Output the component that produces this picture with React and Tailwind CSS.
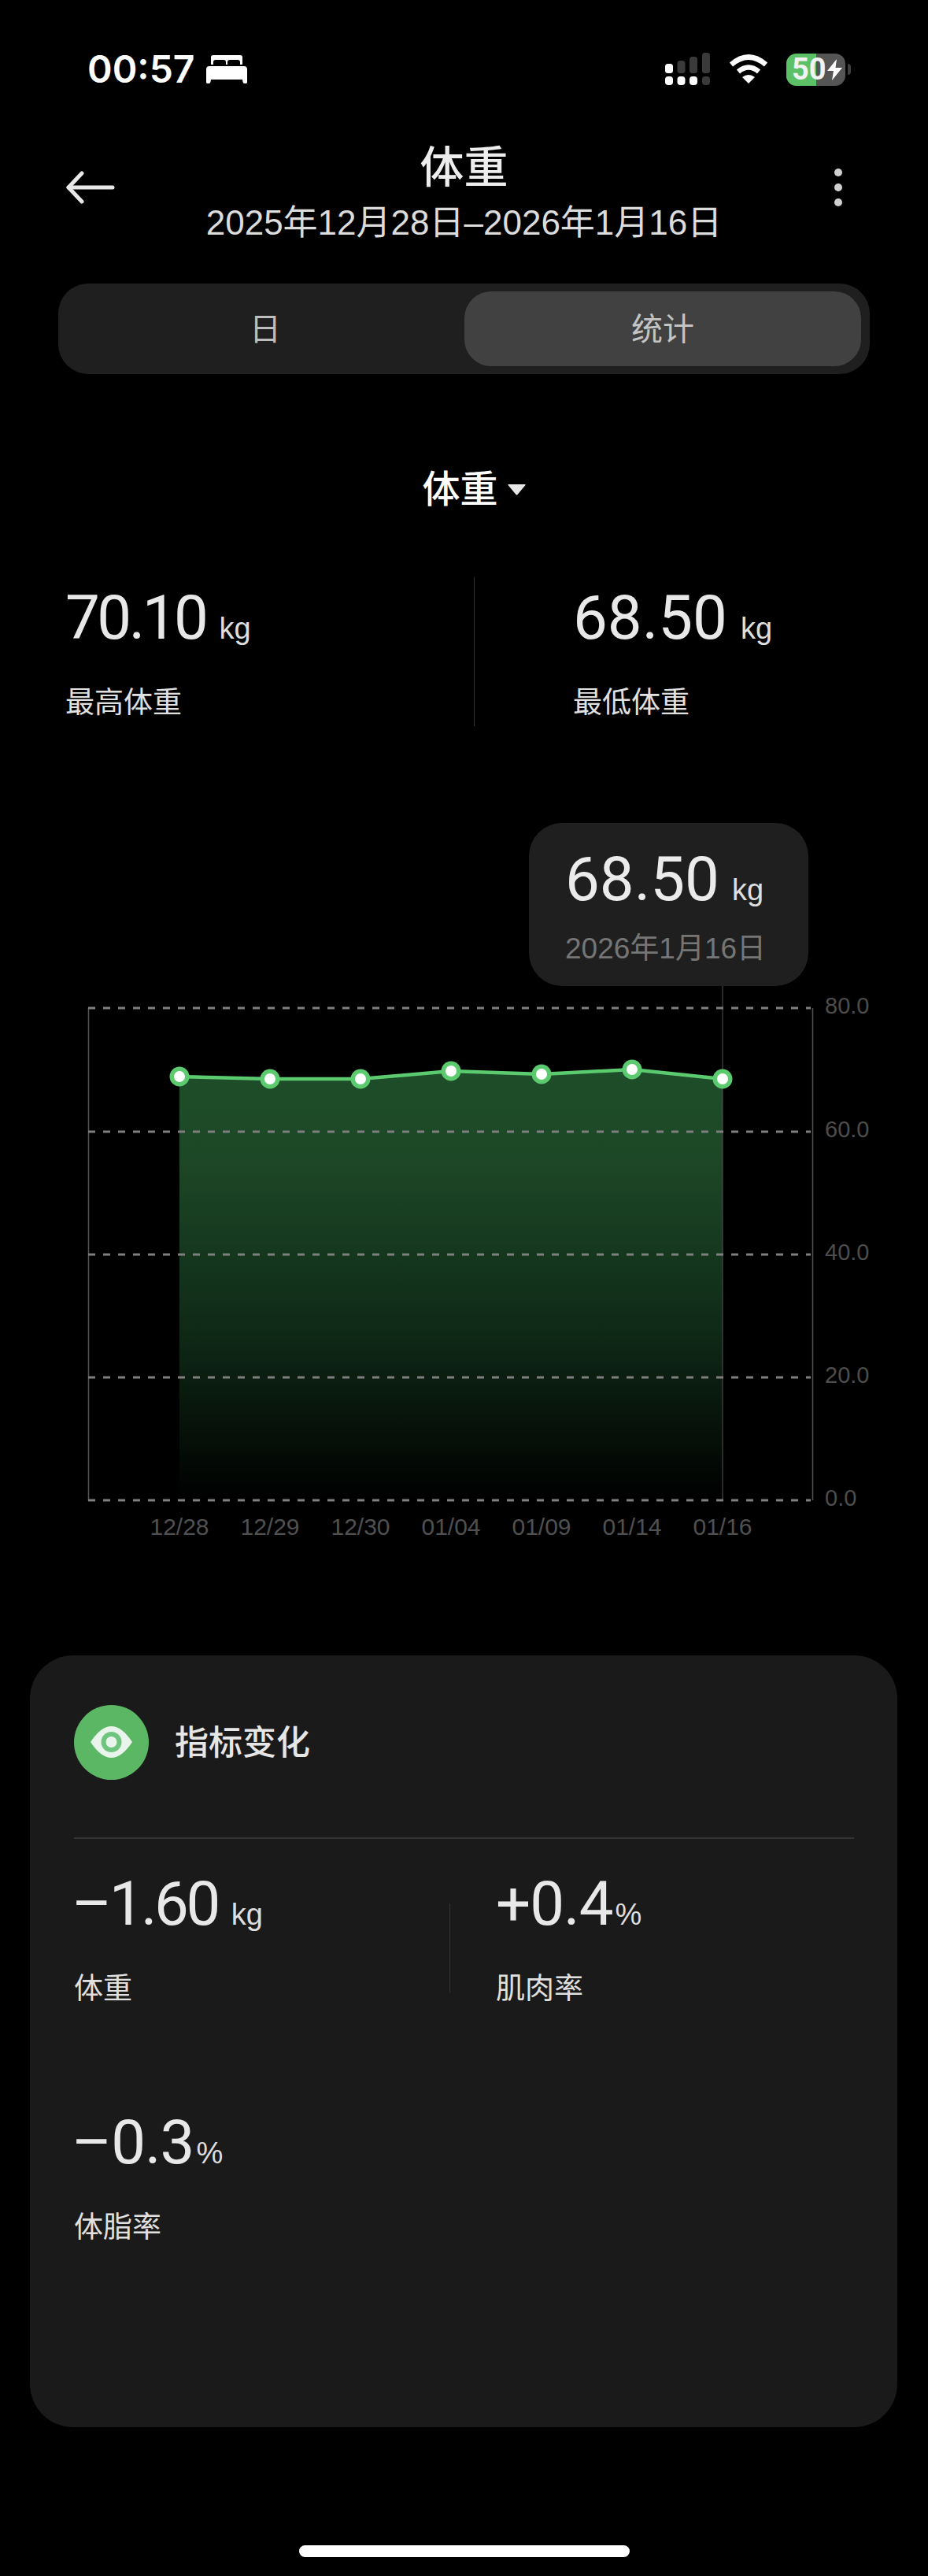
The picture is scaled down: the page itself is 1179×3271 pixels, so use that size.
import React from 'react';

const FONT = '"Liberation Sans", "Noto Sans CJK SC", sans-serif';

const points = [
    { x: 228, y: 1367, label: '12/28' },
    { x: 343, y: 1370, label: '12/29' },
    { x: 458, y: 1370, label: '12/30' },
    { x: 573, y: 1360, label: '01/04' },
    { x: 688, y: 1364, label: '01/09' },
    { x: 803, y: 1358, label: '01/14' },
    { x: 918, y: 1370, label: '01/16' },
];

const gridLines = [
    { y: 1280, label: '80.0' },
    { y: 1437, label: '60.0' },
    { y: 1593, label: '40.0' },
    { y: 1749, label: '20.0' },
    { y: 1905, label: '0.0' },
];

const StatusBar = () => (
    <div className="flex h-[176px] items-center justify-between pl-[111px] pr-[98px]">
        <div className="flex items-center gap-[15px]">
            <span className="font-[Inter] text-[48px] leading-[60px] font-semibold text-white">00:57</span>
            <svg width="52" height="36" viewBox="0 0 52 36" fill="white">
                <path d="M6 2.5 Q6 0 9 0 H43 Q46 0 46 2.5 V12 H43 V9 Q43 6 40 6 H30 Q27 6 27 9 V12 H25 V9 Q25 6 22 6 H12 Q9 6 9 9 V12 H6 Z" />
                <path d="M4 14 H48 Q52 14 52 18 V34.5 Q52 36 50 36 H48.5 Q47 36 46.5 34 L46 31 H6 L5.5 34 Q5 36 3.500 36 H2 Q0 36 0 34.5 V18 Q0 14 4 14 Z" />
            </svg>
        </div>
        <div className="flex items-center">
            <svg width="57" height="42" viewBox="0 0 57 42">
                <rect x="0" y="14" width="10" height="12" rx="3.500" fill="white" />
                <rect x="15.500" y="10" width="10" height="16" rx="3.500" fill="#3a3a3a" />
                <rect x="31" y="5" width="10" height="21" rx="3.500" fill="#3a3a3a" />
                <rect x="47" y="0" width="10" height="26" rx="3.500" fill="#3a3a3a" />
                <rect x="0" y="30" width="10" height="11" rx="4" fill="white" />
                <rect x="15.500" y="30" width="10" height="11" rx="4" fill="white" />
                <rect x="31" y="30" width="10" height="11" rx="4" fill="white" />
                <rect x="47" y="30" width="10" height="11" rx="4" fill="#3a3a3a" />
            </svg>
            <svg className="ml-[24px]" width="50" height="38" viewBox="0 0 50 38" fill="none" stroke="white" strokeWidth="6.500">
                <path d="M3 13 Q25 -6 47 13" />
                <path d="M12 22 Q25 11 38 22" />
                <path d="M25 37 L17 29 Q25 23 33 29 Z" fill="white" stroke="none" />
            </svg>
            <div className="relative ml-[23px] flex h-[41px] w-[75px] rounded-[13px] bg-[#555555]">
                <div className="h-full w-[38px] rounded-l-[13px] bg-[#5cc166]" />
                <span className="absolute left-[7px] top-0 font-[Roboto] text-[38px] leading-[41px] font-bold text-[#f2f2f2]">50</span>
                <svg className="absolute left-[52px] top-[7px]" width="19" height="27" viewBox="0 0 19 27" fill="white">
                    <path d="M12 0 L0 15 H8 L6 27 L19 11 H10.500 Z" />
                </svg>
            </div>
            <div className="ml-[3px] h-[14px] w-[4px] rounded-r-full bg-[#3f3f3f]" />
        </div>
    </div>
);

const Header = () => (
    <div className="flex items-start">
        <div className="w-[200px] pl-[84px] pt-[40px]">
            <svg width="62" height="44" viewBox="0 0 62 44" fill="none" stroke="#e8e8e8" strokeWidth="5" strokeLinecap="round" strokeLinejoin="round">
                <path d="M3 22 H59" />
                <path d="M20 4 L3 22 L20 40" />
            </svg>
        </div>
        <div className="flex flex-1 flex-col items-center pt-[2px]">
            <div className="text-[56px] leading-[70px] font-medium text-[#ededed]">体重</div>
            <div className="mt-[5px] text-[44px] leading-[60px] text-[#dcdcdc]">2025年12月28日–2026年1月16日</div>
        </div>
        <div className="flex w-[200px] flex-col items-end gap-[9px] pr-[109px] pt-[38px]">
            <div className="h-[10px] w-[10px] rounded-full bg-[#d0d0d0]" />
            <div className="h-[10px] w-[10px] rounded-full bg-[#d0d0d0]" />
            <div className="h-[10px] w-[10px] rounded-full bg-[#d0d0d0]" />
        </div>
    </div>
);

const Tabs = () => (
    <div className="ml-[74px] mt-[47px] flex h-[115px] w-[1031px] rounded-[38px] bg-[#1f1f1f] py-[10px] pr-[11px]">
        <div className="flex w-[516px] items-center justify-center pl-[10px] text-[40px] text-[#bdbdbd]">日</div>
        <div className="flex flex-1 items-center justify-center rounded-[34px] bg-[#414141] text-[40px] text-[#c4c4c4]">统计</div>
    </div>
);

const Stat = ({ value, unit, label, numClass = '', unitClass = 'ml-[17px]' }) => (
    <div>
        <div className="flex h-[80px] items-baseline pt-[2px] leading-[80px]">
            <span className={`font-[Roboto] text-[78px] font-[450] text-[#e8e8e8] ${numClass}`}>{value}</span>
            <span className={`text-[38px] text-[#dedede] ${unitClass}`}>{unit}</span>
        </div>
        <div className="mt-[45px] text-[37px] leading-[50px] text-[#e0e0e0]">{label}</div>
    </div>
);

const Chart = () => (
    <div className="relative mt-[123px] h-[920px]">
        <svg className="block" width="1179" height="920" viewBox="0 1045 1179 920">
            <defs>
                <linearGradient id="area" x1="0" y1="1360" x2="0" y2="1905" gradientUnits="userSpaceOnUse">
                    <stop offset="0" stopColor="#1e4d29" />
                    <stop offset="0.2" stopColor="#1d4827" />
                    <stop offset="0.6" stopColor="#0f2a17" />
                    <stop offset="1" stopColor="#000000" />
                </linearGradient>
            </defs>
            <path
                d={`M228 1905 ${points.map(p => `L${p.x} ${p.y}`).join(' ')} L918 1905 Z`}
                fill="url(#area)"
            />
            <line x1="112.500" y1="1280" x2="112.500" y2="1905" stroke="#555555" strokeWidth="1.500" />
            <line x1="1032.500" y1="1280" x2="1032.500" y2="1905" stroke="#555555" strokeWidth="1.500" />
            <line x1="918" y1="1252" x2="918" y2="1905" stroke="#555555" strokeWidth="1" />
            {gridLines.map(g => (
                <g key={g.label}>
                    <line x1="112" y1={g.y} x2="1030" y2={g.y} stroke="#7f7f7f" strokeWidth="3" strokeDasharray="9 10" />
                    <text x="1048" y={g.y + 7} fontSize="29" fontFamily={FONT} fill="#4d4d4d">{g.label}</text>
                </g>
            ))}
            <polyline
                points={points.map(p => `${p.x},${p.y}`).join(' ')}
                fill="none"
                stroke="#5ccb6f"
                strokeWidth="4.500"
            />
            {points.map(p => (
                <g key={p.label}>
                    <circle cx={p.x} cy={p.y} r="12.500" fill="#5ccb6f" />
                    <circle cx={p.x} cy={p.y} r="7" fill="white" />
                    <text x={p.x} y="1949" textAnchor="middle" fontSize="30" fontFamily={FONT} fill="#505050">{p.label}</text>
                </g>
            ))}
        </svg>
        <div className="absolute left-[672px] top-0 h-[207px] w-[355px] rounded-[42px] bg-[#1f1f1f] pl-[46px] pt-[32px]">
            <div className="flex h-[80px] items-baseline leading-[80px]">
                <span className="font-[Roboto] text-[78px] font-[450] text-[#ebebeb]">68.50</span>
                <span className="ml-[16px] text-[38px] text-[#dedede]">kg</span>
            </div>
            <div className="mt-[23px] text-[37px] leading-[50px] text-[#757575]">2026年1月16日</div>
        </div>
    </div>
);

const Card = () => (
    <div className="ml-[38px] mt-[137px] h-[980px] w-[1102px] rounded-[55px] bg-[#1a1a1a] px-[56px] pt-[63px]">
        <div className="flex items-center gap-[33px]">
            <svg width="95" height="95" viewBox="0 0 95 95">
                <circle cx="47.500" cy="47.500" r="47.500" fill="#5cb765" />
                <path d="M21 47 Q47.500 7 74 47 Q47.500 87 21 47 Z" fill="#e9f5ea" />
                <circle cx="47.500" cy="47" r="13" fill="#6fc47f" />
                <circle cx="47.500" cy="47" r="7" fill="#e9f5ea" />
            </svg>
            <div className="text-[43px] leading-[60px] font-medium text-[#e6e6e6]">指标变化</div>
        </div>
        <div className="mt-[73px] h-[2px] w-[991px] bg-[#333333]" />
        <div className="mt-[41px] flex">
            <div className="w-[477px]">
                <Stat value="–1.60" unit="kg" label="体重" numClass="-ml-[3px] tracking-[-3.5px]" />
            </div>
            <div className="mt-[41px] h-[113px] w-[1px] bg-[#333333]" />
            <div className="pl-[58px]">
                <Stat value="+0.4" unit="%" label="肌肉率" numClass="tracking-[-1px]" unitClass="ml-[3px]" />
            </div>
        </div>
        <div className="mt-[128px]">
            <Stat value="–0.3" unit="%" label="体脂率" numClass="-ml-[3px] tracking-[-1px]" unitClass="ml-[3px]" />
        </div>
    </div>
);

export default function App() {
    return (
        <div className="flex h-[3271px] w-[1179px] flex-col overflow-hidden bg-black" style={{ fontFamily: FONT }}>
            <StatusBar />
            <Header />
            <Tabs />
            <div className="mt-[117px] flex h-[60px] items-center justify-center gap-[12px] pl-[25px]">
                <span className="text-[48px] leading-[60px] font-medium text-white">体重</span>
                <svg width="23" height="14" viewBox="0 0 23 14" fill="#e8e8e8">
                    <path d="M1 0 H22 Q23 0 22.500 1 L12.500 13 Q11.500 14 10.500 13 L0.500 1 Q0 0 1 0 Z" />
                </svg>
            </div>
            <div className="relative mt-[81px] flex h-[189px] pt-[10px]">
                <div className="w-[602px] pl-[83px]">
                    <Stat value="70.10" unit="kg" label="最高体重" numClass="tracking-[-3.5px]" />
                </div>
                <div className="-mt-[10px] h-[189px] w-[1px] bg-[#333333]" />
                <div className="pl-[125px]">
                    <Stat value="68.50" unit="kg" label="最低体重" />
                </div>
            </div>
            <Chart />
            <Card />
            <div className="mt-[150px] flex justify-center">
                <div className="h-[15px] w-[420px] rounded-full bg-white" />
            </div>
        </div>
    );
}
